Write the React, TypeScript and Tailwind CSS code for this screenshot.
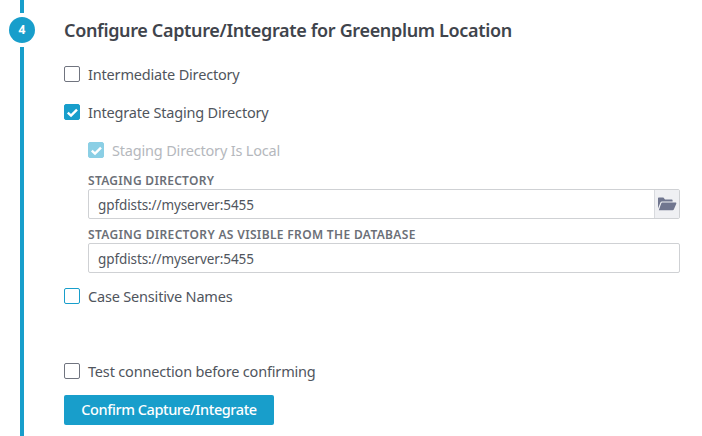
import React from "react";

function Box({ state }: { state: "off" | "on" | "faded" | "focus" }) {
  const cls =
    state === "on"
      ? "bg-[#189ecb] border-[#189ecb]"
      : state === "faded"
      ? "bg-[#8bcfe5] border-[#8bcfe5]"
      : state === "focus"
      ? "bg-white border-[#189ecb]"
      : "bg-white border-[#70747f]";
  return (
    <span className={`w-4 h-4 shrink-0 rounded-[2px] border flex items-center justify-center ${cls}`}>
      {state === "on" || state === "faded" ? (
        <svg width="13" height="13" viewBox="0 0 13 13" fill="none">
          <path d="M1.8 6.6 L5 9.6 L11 3.6" stroke="white" strokeWidth="2.4" />
        </svg>
      ) : null}
    </span>
  );
}

function Check({ label, state, className = "" }: { label: string; state: "off" | "on" | "faded" | "focus"; className?: string }) {
  return (
    <div className={`flex items-center gap-2 h-5 ${className}`}>
      <Box state={state} />
      <span className={`pt-px text-[14.5px] tracking-[-0.18px] ${state === "faded" ? "text-[#b5b8bd]" : "text-[#50555d]"}`}>{label}</span>
    </div>
  );
}

export default function App() {
  return (
    <div className="w-[702px] h-[436px] bg-white flex overflow-hidden font-['Noto_Sans','Liberation_Sans',sans-serif]">
      <div className="w-[64px] shrink-0 flex flex-col pl-[9px]">
        <div className="w-[26px] flex flex-col items-center h-full">
          <div className="w-[3.5px] h-[13px] bg-[#189ecb]" />
          <div className="w-[26px] h-[26px] mt-1 mb-1 rounded-full bg-[#189ecb] flex items-center justify-center text-white text-[12px] font-bold">4</div>
          <div className="w-[3.5px] flex-1 bg-[#189ecb]" />
        </div>
      </div>
      <div className="flex flex-col w-[616px]">
        <h1 className="mt-[17px] h-[26px] leading-[26px] text-[18px] font-semibold text-[#3f444c] tracking-[-0.34px]">
          Configure Capture/Integrate for Greenplum Location
        </h1>
        <Check className="mt-[21px]" label="Intermediate Directory" state="off" />
        <Check className="mt-[18px]" label="Integrate Staging Directory" state="on" />
        <div className="ml-6 flex flex-col">
          <Check className="mt-[18px]" label="Staging Directory Is Local" state="faded" />
          <label className="mt-[14px] h-[14px] leading-[14px] text-[12px] font-semibold tracking-[0.3px] text-[#6b6f77]">STAGING DIRECTORY</label>
          <div className="mt-[1px] h-[30px] w-[592px] flex border border-[#cfd1d4] rounded-[2px]">
            <div className="flex-1 px-[9px] text-[13.5px] leading-[30px] text-[#50555d] tracking-[-0.1px]">gpfdists://myserver:5455</div>
            <div className="w-[25px] bg-[#eff0f3] border-l border-[#d8dade] flex items-center justify-center">
              <svg width="20" height="16" viewBox="0 0 20 16">
                <path d="M1 2.6 C1 2 1.4 1.6 2 1.6 H6.4 L8 3.4 H14.6 C15.2 3.4 15.6 3.8 15.6 4.4 V5.4 H5 C4.2 5.4 3.7 5.8 3.4 6.5 L1 12.4 Z" fill="#70768f" />
                <path d="M5.2 6.6 H18.6 C19.2 6.6 19.5 7.1 19.3 7.7 L16.8 13.4 C16.6 13.9 16.2 14.2 15.6 14.2 H1.8 L4.2 7.4 C4.4 6.9 4.7 6.6 5.2 6.6 Z" fill="#70768f" />
              </svg>
            </div>
          </div>
          <label className="mt-[9px] h-[14px] leading-[14px] text-[12px] font-semibold tracking-[0.34px] text-[#6b6f77]">STAGING DIRECTORY AS VISIBLE FROM THE DATABASE</label>
          <div className="mt-[1px] h-[30px] w-[592px] border border-[#cfd1d4] rounded-[2px] px-[9px] text-[13.5px] leading-[30px] text-[#50555d] tracking-[-0.1px]">gpfdists://myserver:5455</div>
        </div>
        <Check className="mt-[13px]" label="Case Sensitive Names" state="focus" />
        <Check className="mt-[55px]" label="Test connection before confirming" state="off" />
        <button className="mt-[14px] w-[210px] h-[30px] bg-[#189ecb] rounded-[2px] text-white text-[14.5px] font-medium tracking-[-0.42px]">Confirm Capture/Integrate</button>
      </div>
    </div>
  );
}
